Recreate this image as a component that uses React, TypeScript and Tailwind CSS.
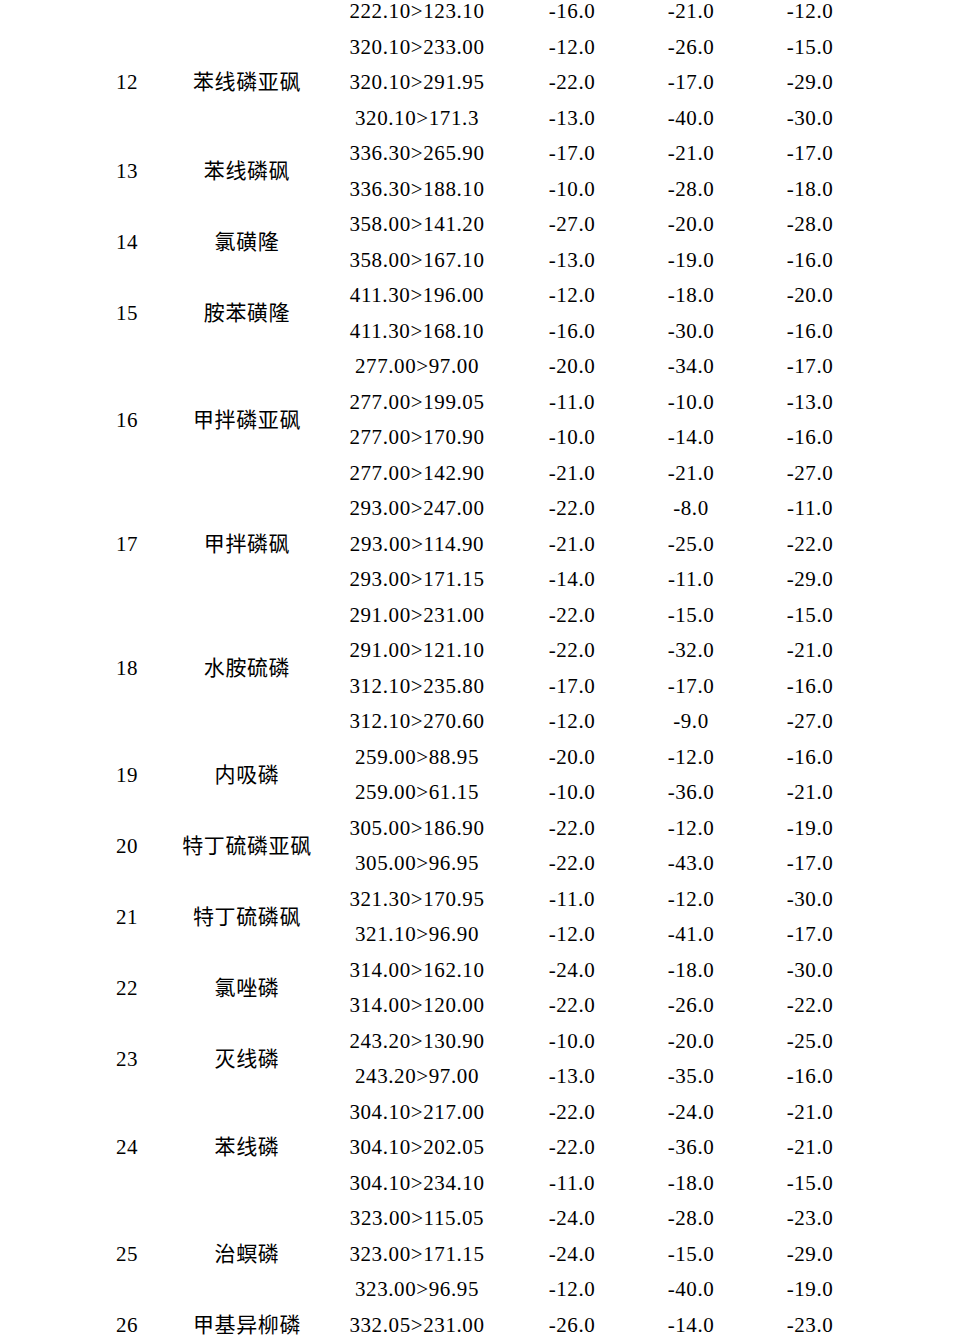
import React from 'react';

type Group = {
  no: string;
  name: string;
  rows: string[][];
};

// each row: transition, then three values
const groups: Group[] = [
  { no: '', name: '', rows: [['222.10>123.10', '-16.0', '-21.0', '-12.0']] },
  {
    no: '12',
    name: '苯线磷亚砜',
    rows: [
      ['320.10>233.00', '-12.0', '-26.0', '-15.0'],
      ['320.10>291.95', '-22.0', '-17.0', '-29.0'],
      ['320.10>171.3', '-13.0', '-40.0', '-30.0'],
    ],
  },
  {
    no: '13',
    name: '苯线磷砜',
    rows: [
      ['336.30>265.90', '-17.0', '-21.0', '-17.0'],
      ['336.30>188.10', '-10.0', '-28.0', '-18.0'],
    ],
  },
  {
    no: '14',
    name: '氯磺隆',
    rows: [
      ['358.00>141.20', '-27.0', '-20.0', '-28.0'],
      ['358.00>167.10', '-13.0', '-19.0', '-16.0'],
    ],
  },
  {
    no: '15',
    name: '胺苯磺隆',
    rows: [
      ['411.30>196.00', '-12.0', '-18.0', '-20.0'],
      ['411.30>168.10', '-16.0', '-30.0', '-16.0'],
    ],
  },
  {
    no: '16',
    name: '甲拌磷亚砜',
    rows: [
      ['277.00>97.00', '-20.0', '-34.0', '-17.0'],
      ['277.00>199.05', '-11.0', '-10.0', '-13.0'],
      ['277.00>170.90', '-10.0', '-14.0', '-16.0'],
      ['277.00>142.90', '-21.0', '-21.0', '-27.0'],
    ],
  },
  {
    no: '17',
    name: '甲拌磷砜',
    rows: [
      ['293.00>247.00', '-22.0', '-8.0', '-11.0'],
      ['293.00>114.90', '-21.0', '-25.0', '-22.0'],
      ['293.00>171.15', '-14.0', '-11.0', '-29.0'],
    ],
  },
  {
    no: '18',
    name: '水胺硫磷',
    rows: [
      ['291.00>231.00', '-22.0', '-15.0', '-15.0'],
      ['291.00>121.10', '-22.0', '-32.0', '-21.0'],
      ['312.10>235.80', '-17.0', '-17.0', '-16.0'],
      ['312.10>270.60', '-12.0', '-9.0', '-27.0'],
    ],
  },
  {
    no: '19',
    name: '内吸磷',
    rows: [
      ['259.00>88.95', '-20.0', '-12.0', '-16.0'],
      ['259.00>61.15', '-10.0', '-36.0', '-21.0'],
    ],
  },
  {
    no: '20',
    name: '特丁硫磷亚砜',
    rows: [
      ['305.00>186.90', '-22.0', '-12.0', '-19.0'],
      ['305.00>96.95', '-22.0', '-43.0', '-17.0'],
    ],
  },
  {
    no: '21',
    name: '特丁硫磷砜',
    rows: [
      ['321.30>170.95', '-11.0', '-12.0', '-30.0'],
      ['321.10>96.90', '-12.0', '-41.0', '-17.0'],
    ],
  },
  {
    no: '22',
    name: '氯唑磷',
    rows: [
      ['314.00>162.10', '-24.0', '-18.0', '-30.0'],
      ['314.00>120.00', '-22.0', '-26.0', '-22.0'],
    ],
  },
  {
    no: '23',
    name: '灭线磷',
    rows: [
      ['243.20>130.90', '-10.0', '-20.0', '-25.0'],
      ['243.20>97.00', '-13.0', '-35.0', '-16.0'],
    ],
  },
  {
    no: '24',
    name: '苯线磷',
    rows: [
      ['304.10>217.00', '-22.0', '-24.0', '-21.0'],
      ['304.10>202.05', '-22.0', '-36.0', '-21.0'],
      ['304.10>234.10', '-11.0', '-18.0', '-15.0'],
    ],
  },
  {
    no: '25',
    name: '治螟磷',
    rows: [
      ['323.00>115.05', '-24.0', '-28.0', '-23.0'],
      ['323.00>171.15', '-24.0', '-15.0', '-29.0'],
      ['323.00>96.95', '-12.0', '-40.0', '-19.0'],
    ],
  },
  {
    no: '26',
    name: '甲基异柳磷',
    rows: [['332.05>231.00', '-26.0', '-14.0', '-23.0']],
  },
];

export default function App() {
  return (
    <div className="w-[959px] h-[1341px] overflow-hidden bg-white text-black">
      <table
        className="mt-[-6px] ml-[77px] w-[788px] table-fixed border-collapse text-[21px] tracking-[0.6px] leading-none whitespace-nowrap"
        style={{ fontFamily: '"Liberation Serif", "Noto Sans CJK SC", serif' }}
      >
        <colgroup>
          <col className="w-[100px]" />
          <col className="w-[140px]" />
          <col className="w-[200px]" />
          <col className="w-[110px]" />
          <col className="w-[128px]" />
          <col className="w-[110px]" />
        </colgroup>
        <tbody>
          {groups.map((g, gi) =>
            g.rows.map((r, ri) => (
              <tr key={`${gi}-${ri}`} className="h-[35.5px]">
                {ri === 0 && (
                  <>
                    <td rowSpan={g.rows.length} className="p-0 text-center align-middle">
                      {g.no}
                    </td>
                    <td rowSpan={g.rows.length} className="p-0 text-center align-middle">
                      {g.name}
                    </td>
                  </>
                )}
                {r.map((v, vi) => (
                  <td key={vi} className="p-0 text-center align-middle">
                    {v}
                  </td>
                ))}
              </tr>
            ))
          )}
        </tbody>
      </table>
    </div>
  );
}
